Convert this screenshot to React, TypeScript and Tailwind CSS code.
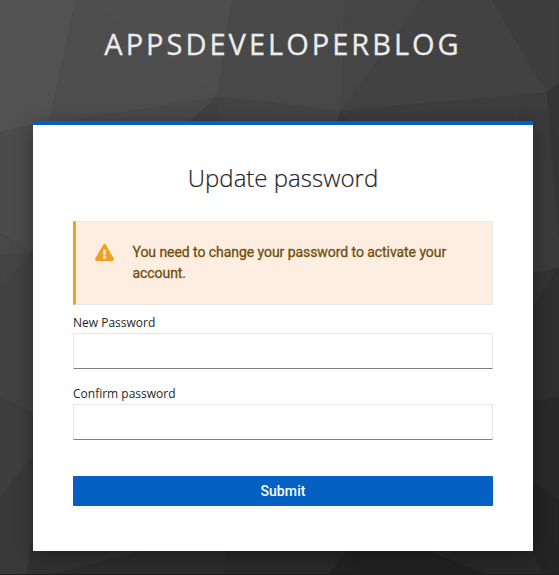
const facets: [string, string][] = [
  ['0,0 76,0 49,124 0,132', '#525252'],
  ['76,0 232,0 217,97 49,124', '#4d4d4d'],
  ['90,0 232,0 217,97', '#4e4e4e'],
  ['232,0 345,0 341,111 217,97', '#484848'],
  ['345,0 422,0 341,111', '#454545'],
  ['422,0 492,0 547,93 341,111', '#424242'],
  ['492,0 559,0 559,83 547,92', '#3e3e3e'],
  ['49,124 217,97 180,130', '#494949'],
  ['217,97 180,130 222,130', '#414141'],
  ['217,97 222,130 335,130 341,111', '#434343'],
  ['341,111 335,130 352,130', '#383838'],
  ['341,111 547,93 551,130 352,130', '#3d3d3d'],
  ['547,92 559,83 559,245 548,110', '#353535'],
  ['0,132 49,122 49,256 33,253 0,233', '#4b4b4b'],
  ['0,233 33,253 0,256', '#484848'],
  ['0,256 33,253 0,287', '#444444'],
  ['0,287 33,253 49,238 49,420 0,398', '#414141'],
  ['0,398 49,420 33,455 0,499', '#3e3e3e'],
  ['0,499 49,435 27,575 0,575', '#393939'],
  ['27,575 31,545 160,545 50,575', '#313131'],
  ['50,575 165,545 228,545 225,575', '#2c2c2c'],
  ['225,575 228,545 350,545 329,575', '#292929'],
  ['329,575 350,545 362,545 358,575', '#222222'],
  ['358,575 361,545 415,545 490,575', '#212121'],
  ['415,545 490,575 559,575 559,545', '#282828'],
  ['520,110 548,110 559,245 559,268 520,276', '#3b3b3b'],
  ['520,276 559,268 520,330', '#333333'],
  ['520,330 559,268 559,397 520,405', '#2f2f2f'],
  ['520,405 559,397 559,501 520,473', '#292929'],
  ['520,473 559,501 559,575 545,575 520,530', '#242424'],
];

function PasswordField({ id, label }: { id: string; label: string }) {
  return (
    <div>
      <label htmlFor={id} className="block h-5 text-[12px] leading-[19px] text-[#262626]">
        {label}
      </label>
      <input
        id={id}
        type="password"
        className="block h-9 w-full border border-[#e7e7e7] border-b-[#808285] bg-white px-2 text-sm outline-none"
      />
    </div>
  );
}

export default function App() {
  return (
    <div className="relative h-[575px] w-[559px] overflow-hidden bg-[#3e3e3e] font-['Open_Sans','Noto_Sans',sans-serif]">
      <svg aria-hidden="true" className="absolute inset-0" width="559" height="575" viewBox="0 0 559 575">
        {facets.map(([points, fill]) => (
          <polygon key={points} points={points} fill={fill} stroke={fill} strokeWidth="0.6" />
        ))}
        <rect y="574" width="559" height="1" fill="#1f1f1f" />
      </svg>
      <div className="relative ml-[33px] w-[500px]">
        <header className="flex h-[121px] justify-center pt-[24px]">
          <div className="whitespace-nowrap text-[29px] leading-[40px] tracking-[3px] text-[#ececec] [-webkit-text-stroke:0.3px_#ececec]">
            APPSDEVELOPERBLOG
          </div>
        </header>
        <main className="h-[430px] border-t-4 border-[#0460c2] bg-white px-10 shadow-[0_4px_18px_rgba(0,0,0,0.35)]">
          <h1 className="pt-[37px] text-center text-[24px] font-light leading-[32px] text-[#262626] [-webkit-text-stroke:0.2px_#262626]">
            Update password
          </h1>
          <div className="mt-[27px] flex h-[84px] border border-l-[3px] border-[#e7e7e7] border-l-[#f0a024] bg-[#fdeee1] pl-[19px] pt-5">
            <svg className="mt-[2px] h-[17px] w-[19px] shrink-0" viewBox="0 0 576 512" aria-hidden="true">
              <path
                fill="#f0a024"
                d="M569.517 440.013C587.975 472.007 564.806 512 527.94 512H48.054c-36.937 0-59.999-40.055-41.577-71.987L246.423 23.985c18.467-32.009 64.72-31.951 83.154 0l239.94 416.028zM288 354c-25.405 0-46 20.595-46 46s20.595 46 46 46 46-20.595 46-46-20.595-46-46-46zm-43.673-165.346l7.418 136c.347 6.364 5.609 11.346 11.982 11.346h48.546c6.373 0 11.635-4.982 11.982-11.346l7.418-136c.375-6.874-5.098-12.654-11.982-12.654h-63.383c-6.884 0-12.356 5.78-11.981 12.654z"
              />
            </svg>
            <p className="ml-[18.5px] whitespace-nowrap font-['Roboto',sans-serif] text-[14px] leading-[21px] tracking-[-0.06px] text-[#734d0c] [-webkit-text-stroke:0.3px_#734d0c]">
              You need to change your password to activate your
              <br />
              account.
            </p>
          </div>
          <form className="mt-[8px]" onSubmit={(event) => event.preventDefault()}>
            <div className="flex flex-col gap-[15px]">
              <PasswordField id="password-new" label="New Password" />
              <PasswordField id="password-confirm" label="Confirm password" />
            </div>
            <button
              type="submit"
              className="mt-9 block h-[30px] w-full rounded-[1px] bg-[#0460c2] font-['Roboto',sans-serif] text-[14px] font-medium leading-[30px] tracking-[0.1px] text-white"
            >
              Submit
            </button>
          </form>
        </main>
      </div>
    </div>
  );
}
